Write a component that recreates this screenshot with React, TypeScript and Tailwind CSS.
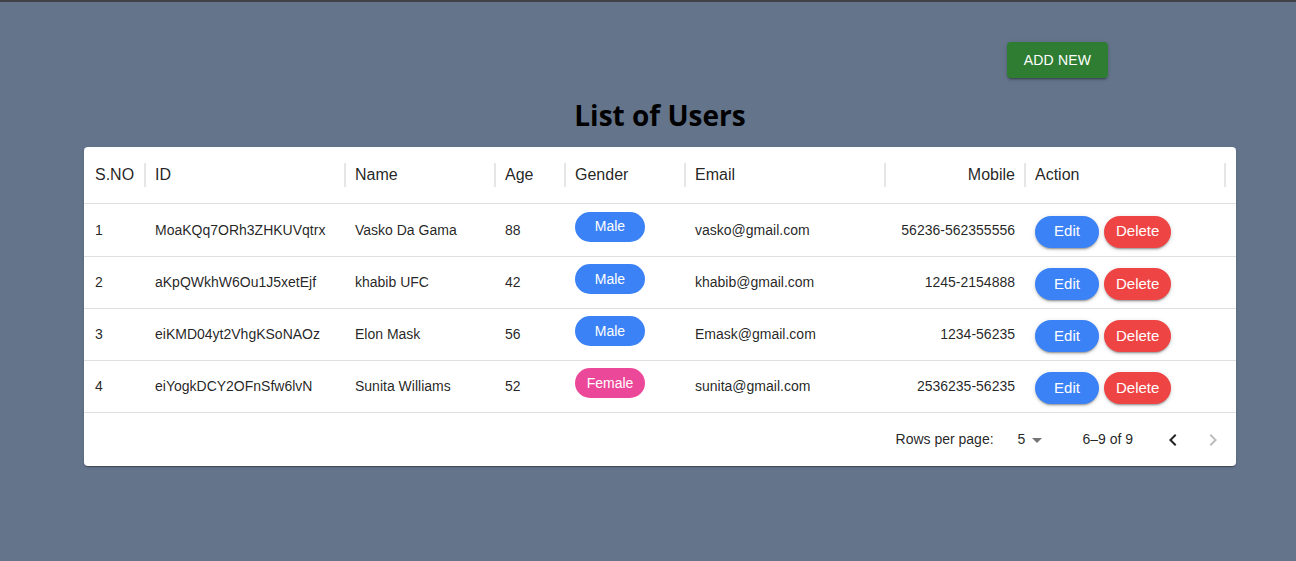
import React from "react";

const cols = [
  { key: "sno", label: "S.NO", w: 61 },
  { key: "id", label: "ID", w: 200 },
  { key: "name", label: "Name", w: 150 },
  { key: "age", label: "Age", w: 70 },
  { key: "gender", label: "Gender", w: 120 },
  { key: "email", label: "Email", w: 200 },
  { key: "mobile", label: "Mobile", w: 140, right: true },
  { key: "action", label: "Action", w: 200 },
];

const rows = [
  { sno: "1", id: "MoaKQq7ORh3ZHKUVqtrx", name: "Vasko Da Gama", age: "88", gender: "Male", email: "vasko@gmail.com", mobile: "56236-562355556" },
  { sno: "2", id: "aKpQWkhW6Ou1J5xetEjf", name: "khabib UFC", age: "42", gender: "Male", email: "khabib@gmail.com", mobile: "1245-2154888" },
  { sno: "3", id: "eiKMD04yt2VhgKSoNAOz", name: "Elon Mask", age: "56", gender: "Male", email: "Emask@gmail.com", mobile: "1234-56235" },
  { sno: "4", id: "eiYogkDCY2OFnSfw6lvN", name: "Sunita Williams", age: "52", gender: "Female", email: "sunita@gmail.com", mobile: "2536235-56235" },
];

function ArrowLeft({ color }: { color: string }) {
  return (
    <svg width="24" height="24" viewBox="0 0 24 24" fill={color}>
      <path d="M15.41 16.59 10.83 12l4.58-4.59L14 6l-6 6 6 6 1.41-1.41z" />
    </svg>
  );
}
function ArrowRight({ color }: { color: string }) {
  return (
    <svg width="24" height="24" viewBox="0 0 24 24" fill={color}>
      <path d="M8.59 16.59 13.17 12 8.59 7.41 10 6l6 6-6 6-1.41-1.41z" />
    </svg>
  );
}

function ArrowDrop() {
  return (
    <svg width="24" height="24" viewBox="0 0 24 24" fill="rgba(0,0,0,0.54)">
      <path d="M7 10l5 5 5-5z" />
    </svg>
  );
}

export default function App() {
  return (
    <div className="min-h-[561px] w-full bg-[#64748b] border-t-2 border-[#3f4147]" style={{ fontFamily: '"Liberation Sans", Arial, sans-serif' }}>
      <div className="ml-[84px] w-[1152px]">
        <div className="flex justify-end pr-[128px] pt-[40px]">
          <button className="h-[36px] w-[101px] rounded-[4px] bg-[#2e7d32] text-[14px] font-medium uppercase tracking-[0.2px] text-white shadow-[0_3px_1px_-2px_rgba(0,0,0,0.2),0_2px_2px_0_rgba(0,0,0,0.14),0_1px_5px_0_rgba(0,0,0,0.12)]">
            ADD NEW
          </button>
        </div>
        <h1 className="mt-[18px] text-center text-[28px] font-bold leading-[38px] text-black" style={{ fontFamily: '"Open Sans", sans-serif' }}>
          List of Users
        </h1>
        <div className="mt-[13px] rounded-[4px] bg-white text-[rgba(0,0,0,0.87)] shadow-[0_2px_1px_-1px_rgba(0,0,0,0.2),0_1px_1px_0_rgba(0,0,0,0.14),0_1px_3px_0_rgba(0,0,0,0.12)]">
          <div className="flex h-[57px] items-center border-b border-[#e0e0e0]">
            {cols.map((c, i) => (
              <div key={c.key} className="relative flex h-full items-center" style={{ width: c.w }}>
                <div className={`flex-1 text-[16px] ${i === 0 ? "pl-[11px]" : "pl-[10px]"} ${c.right ? "pr-[10px] text-right" : ""}`}>{c.label}</div>
                <div className="absolute right-[-1px] top-[16px] h-[24px] w-[2px] bg-[#e6e6e6]" />
              </div>
            ))}
          </div>
          {rows.map((r, idx) => (
            <div key={r.sno} className={`flex items-center border-b border-[#e0e0e0] text-[14px] ${idx === 0 ? "h-[53px]" : "h-[52px]"}`}>
              <div className="w-[61px] pl-[11px]">{r.sno}</div>
              <div className="w-[200px] pl-[10px]">{r.id}</div>
              <div className="w-[150px] pl-[10px]">{r.name}</div>
              <div className="w-[70px] pl-[10px]">{r.age}</div>
              <div className="w-[120px] pl-[10px]">
                <div className={`mb-[7px] flex h-[30px] w-[70px] items-center justify-center rounded-full text-[14px] text-white ${r.gender === "Male" ? "bg-[#3b82f6]" : "bg-[#ec4899]"}`}>
                  {r.gender}
                </div>
              </div>
              <div className="w-[200px] pl-[10px]">{r.email}</div>
              <div className="w-[140px] pr-[10px] text-right">{r.mobile}</div>
              <div className="flex w-[200px] gap-[5px] pl-[10px] pt-[3px]">
                <button className="h-[32px] min-w-[64px] rounded-full bg-[#3b82f6] px-[12px] text-[15px] text-white shadow-[0_3px_1px_-2px_rgba(0,0,0,0.2),0_2px_2px_0_rgba(0,0,0,0.14),0_1px_5px_0_rgba(0,0,0,0.12)]">Edit</button>
                <button className="h-[32px] min-w-[64px] rounded-full bg-[#ef4444] px-[12px] text-[15px] text-white shadow-[0_3px_1px_-2px_rgba(0,0,0,0.2),0_2px_2px_0_rgba(0,0,0,0.14),0_1px_5px_0_rgba(0,0,0,0.12)]" style={{ minWidth: 67 }}>Delete</button>
              </div>
            </div>
          ))}
          <div className="flex h-[53px] items-center justify-end pr-[11px] text-[14px]">
            <span>Rows per page:</span>
            <span className="ml-[24px]">5</span>
            <ArrowDrop />
            <span className="ml-[33px]">6–9 of 9</span>
            <span className="ml-[28px]"><ArrowLeft color="rgba(0,0,0,0.87)" /></span>
            <span className="ml-[16px]"><ArrowRight color="rgba(0,0,0,0.26)" /></span>
          </div>
        </div>
      </div>
    </div>
  );
}
